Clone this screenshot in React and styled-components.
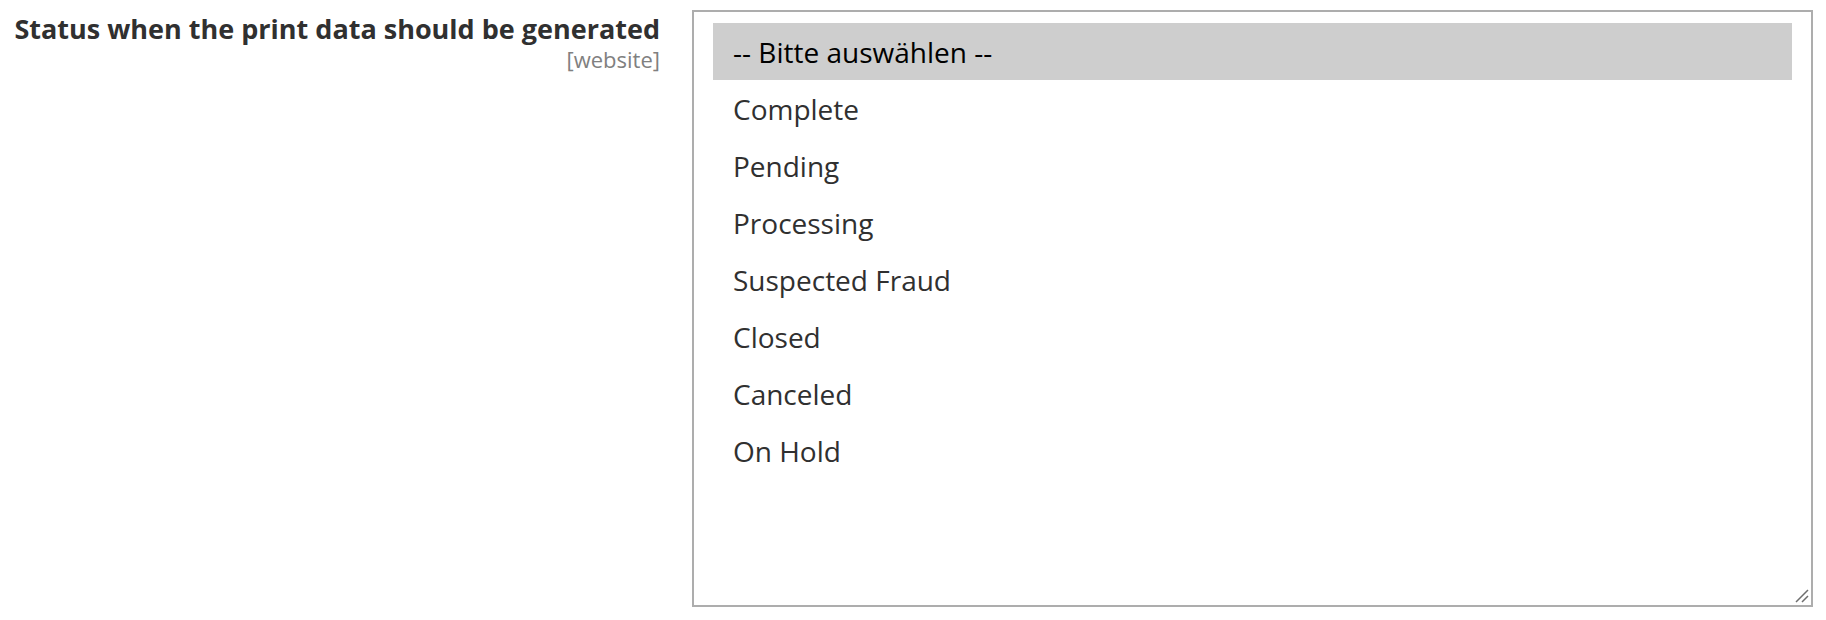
import styled, { createGlobalStyle } from "styled-components";

const GlobalStyle = createGlobalStyle`
  html, body {
    margin: 0;
    padding: 0;
    background: #ffffff;
    font-family: "Open Sans", "Liberation Sans", sans-serif;
    color: #303030;
  }
`;

const Field = styled.div`
  display: flex;
  align-items: flex-start;
  padding: 10px 0 0 15px;
`;

const LabelCol = styled.div`
  width: 645px;
  margin-right: 32px;
  padding-top: 1px;
  text-align: right;
  display: flex;
  flex-direction: column;
  align-items: flex-end;
`;

const Label = styled.label`
  font-size: 27px;
  font-weight: 700;
  line-height: 36px;
  color: #303030;
  white-space: nowrap;
`;

const Scope = styled.span`
  font-size: 22px;
  line-height: 24px;
  color: #808080;
`;

const ListBox = styled.div`
  position: relative;
  box-sizing: border-box;
  width: 1121px;
  height: 597px;
  border: 2px solid #adadad;
  padding: 11px 19px 0;
  display: flex;
  flex-direction: column;
`;

const Option = styled.div`
  height: 57px;
  display: flex;
  align-items: center;
  padding-left: 20px;
  font-size: 28px;
  color: ${(p) => (p.$selected ? "#000000" : "#303030")};
  background: ${(p) => (p.$selected ? "#cecece" : "transparent")};
`;

const Grip = styled.svg`
  position: absolute;
  right: 2px;
  bottom: 2px;
`;

const statuses = [
  "-- Bitte auswählen --",
  "Complete",
  "Pending",
  "Processing",
  "Suspected Fraud",
  "Closed",
  "Canceled",
  "On Hold",
];

export default function App() {
  return (
    <>
      <GlobalStyle />
      <Field>
        <LabelCol>
          <Label htmlFor="print-status">
            Status when the print data should be generated
          </Label>
          <Scope>[website]</Scope>
        </LabelCol>
        <ListBox id="print-status" role="listbox">
          {statuses.map((s, i) => (
            <Option key={s} $selected={i === 0}>
              {s}
            </Option>
          ))}
          <Grip width="15" height="15" viewBox="0 0 15 15">
            <path d="M2 14 L14 2 M8 14 L14 8" stroke="#6e6e6e" strokeWidth="1.5" />
          </Grip>
        </ListBox>
      </Field>
    </>
  );
}
